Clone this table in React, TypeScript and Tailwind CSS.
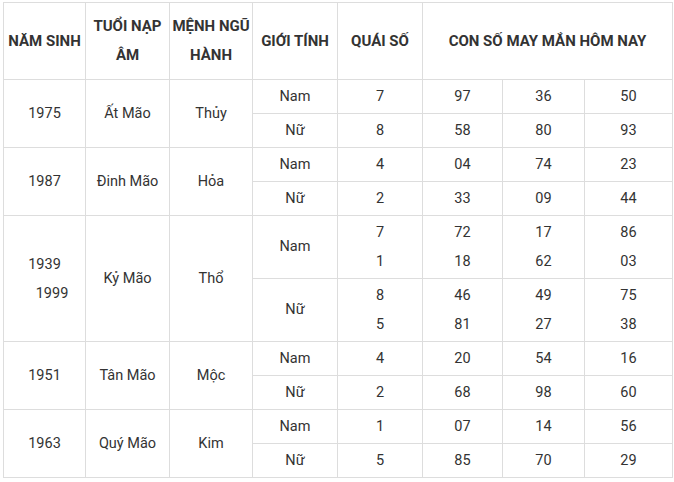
import React from "react";

type Sub = { g: string; q: string[]; n: string[][] };
type Row = { years: string[]; tuoi: string; menh: string; subs: Sub[]; tall?: boolean };

const data: Row[] = [
  { years: ["1975"], tuoi: "Ất Mão", menh: "Thủy", subs: [
    { g: "Nam", q: ["7"], n: [["97", "36", "50"]] },
    { g: "Nữ", q: ["8"], n: [["58", "80", "93"]] },
  ] },
  { years: ["1987"], tuoi: "Đinh Mão", menh: "Hỏa", subs: [
    { g: "Nam", q: ["4"], n: [["04", "74", "23"]] },
    { g: "Nữ", q: ["2"], n: [["33", "09", "44"]] },
  ] },
  { years: ["1939", "1999"], tuoi: "Kỷ Mão", menh: "Thổ", tall: true, subs: [
    { g: "Nam", q: ["7", "1"], n: [["72", "17", "86"], ["18", "62", "03"]] },
    { g: "Nữ", q: ["8", "5"], n: [["46", "49", "75"], ["81", "27", "38"]] },
  ] },
  { years: ["1951"], tuoi: "Tân Mão", menh: "Mộc", subs: [
    { g: "Nam", q: ["4"], n: [["20", "54", "16"]] },
    { g: "Nữ", q: ["2"], n: [["68", "98", "60"]] },
  ] },
  { years: ["1963"], tuoi: "Quý Mão", menh: "Kim", subs: [
    { g: "Nam", q: ["1"], n: [["07", "14", "56"]] },
    { g: "Nữ", q: ["5"], n: [["85", "70", "29"]] },
  ] },
];

const td = "border border-[#dddddd] text-center align-middle p-0";

function Lines({ items }: { items: string[] }) {
  return (
    <>
      {items.map((t, i) => (
        <div key={i} className="leading-[29px]">{t}</div>
      ))}
    </>
  );
}

export default function App() {
  return (
    <div className="w-[674px] h-[482px] bg-white pl-[3px] pt-[2px]" style={{ fontFamily: "Roboto, 'Liberation Sans', sans-serif" }}>
      <table className="table-fixed border-collapse w-[669px] text-[14.5px] text-[#333333]">
        <colgroup>
          <col className="w-[82px]" />
          <col className="w-[84px]" />
          <col className="w-[83px]" />
          <col className="w-[85px]" />
          <col className="w-[85px]" />
          <col className="w-[80px]" />
          <col className="w-[82px]" />
          <col className="w-[88px]" />
        </colgroup>
        <thead>
          <tr className="h-[77px] font-bold text-[15px]">
            <td className={td}>NĂM SINH</td>
            <td className={td}><div className="leading-[29px]">TUỔI NẠP<br />ÂM</div></td>
            <td className={td}><div className="leading-[29px]">MỆNH NGŨ<br />HÀNH</div></td>
            <td className={td}>GIỚI TÍNH</td>
            <td className={td}>QUÁI SỐ</td>
            <td className={td} colSpan={3}>CON SỐ MAY MẮN HÔM NAY</td>
          </tr>
        </thead>
        <tbody>
          {data.map((r) =>
            r.subs.map((s, si) => (
              <tr key={r.tuoi + si} className={r.tall ? "h-[63px]" : "h-[34px]"}>
                {si === 0 && (
                  <>
                    <td className={td} rowSpan={2}>
                      {r.years.length > 1 ? (
                        <>
                          <div className="leading-[29px]">{r.years[0]}</div>
                          <div className="leading-[29px] pl-[15px]">{r.years[1]}</div>
                        </>
                      ) : (
                        r.years[0]
                      )}
                    </td>
                    <td className={td} rowSpan={2}>{r.tuoi}</td>
                    <td className={td} rowSpan={2}>{r.menh}</td>
                  </>
                )}
                <td className={td}>{s.g}</td>
                <td className={td}><Lines items={s.q} /></td>
                {[0, 1, 2].map((c) => (
                  <td key={c} className={td}>
                    <Lines items={s.n.map((row) => row[c])} />
                  </td>
                ))}
              </tr>
            ))
          )}
        </tbody>
      </table>
    </div>
  );
}
